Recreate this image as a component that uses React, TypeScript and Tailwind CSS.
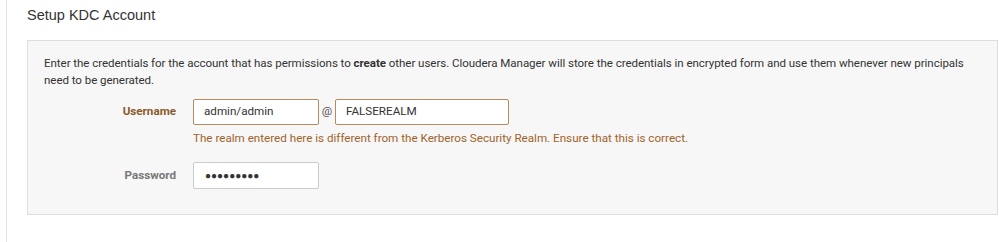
import React from "react";

export default function App() {
  const roboto = { fontFamily: "Roboto, 'Liberation Sans', sans-serif" } as React.CSSProperties;
  return (
    <div className="w-[999px] h-[242px] bg-white pl-[6px] overflow-hidden">
      <div className="h-[242px] border-l border-[#e6e6e6] pl-[20px]">
        <div
          className="pt-[6px] h-[40px] text-[14.5px] leading-[18px] text-[#333]"
          style={{ fontFamily: "'Liberation Sans', Arial, sans-serif" }}
        >
          Setup KDC Account
        </div>
        <div
          className="w-[971px] h-[175px] border border-[#dddddd] bg-[#f7f7f7] pl-[16px] pt-[14px] text-[11.65px] text-[#333]"
          style={roboto}
        >
          <p className="leading-[17px] text-[11.55px] tracking-[-0.05px] pr-[20px]">
            Enter the credentials for the account that has permissions to <b>create</b> other users. Cloudera Manager will store the credentials in encrypted form and use them whenever new principals need to be generated.
          </p>
          <div className="flex items-center mt-[10px]">
            <label className="w-[132px] text-right font-bold text-[#8b5a2b] mr-[17px]">Username</label>
            <div className="w-[126px] h-[26px] border border-[#b88a5e] rounded-[2px] bg-white px-[10px] flex items-center text-[#333]">
              admin/admin
            </div>
            <span className="w-[16px] text-center text-[#555]">@</span>
            <div className="w-[174px] h-[26px] border border-[#b88a5e] rounded-[2px] bg-white px-[10px] flex items-center text-[#333]">
              FALSEREALM
            </div>
          </div>
          <div className="ml-[149px] mt-[5px] leading-[16px] text-[#a0632b]">
            The realm entered here is different from the Kerberos Security Realm. Ensure that this is correct.
          </div>
          <div className="flex items-center mt-[16px]">
            <label className="w-[132px] text-right font-bold text-[#777] mr-[17px]">Password</label>
            <div className="w-[126px] h-[27px] border border-[#cccccc] rounded-[2px] bg-white px-[11px] flex items-center text-[#333] text-[10px]">
              ●●●●●●●●●
            </div>
          </div>
        </div>
      </div>
    </div>
  );
}
